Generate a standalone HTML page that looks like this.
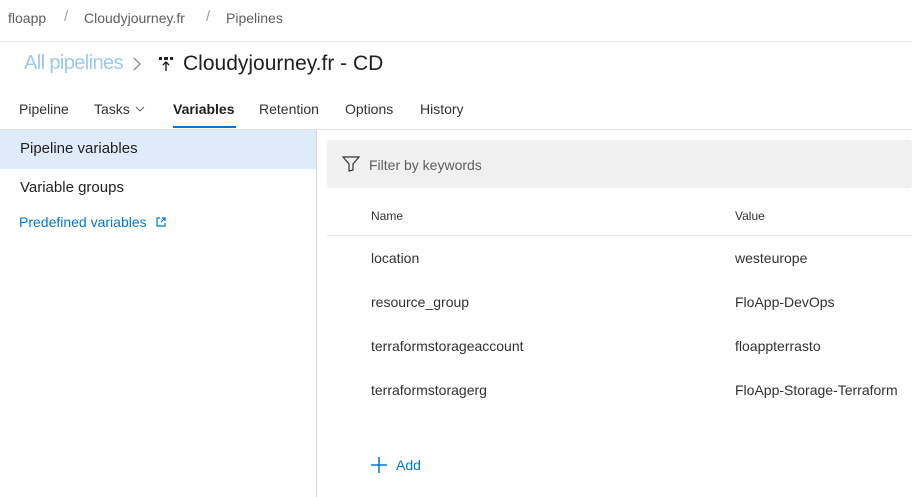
<!DOCTYPE html>
<html><head><style>
*{margin:0;padding:0;box-sizing:border-box}
body{width:912px;height:497px;overflow:hidden;background:#fff;font-family:"Liberation Sans",sans-serif;color:#323130;position:relative}
.a{position:absolute;white-space:nowrap}
</style></head><body>
<div class="a" style="left:8px;top:10px;font-size:14px;color:#605e5c">floapp</div>
<div class="a" style="left:64px;top:8px;font-size:15px;color:#a19f9d">/</div>
<div class="a" style="left:84px;top:10px;font-size:14px;color:#605e5c">Cloudyjourney.fr</div>
<div class="a" style="left:206px;top:8px;font-size:15px;color:#a19f9d">/</div>
<div class="a" style="left:226px;top:10px;font-size:14px;color:#605e5c">Pipelines</div>
<div class="a" style="left:0;top:41px;width:912px;height:1px;background:#e8e8e8"></div>
<div class="a" style="left:24px;top:52px;font-size:20px;letter-spacing:-0.6px;color:#9cc7ef">All pipelines</div>
<svg class="a" style="left:133px;top:57px" width="8" height="14" viewBox="0 0 8 14"><path d="M1 1l6 6-6 6" stroke="#8a8886" stroke-width="1.3" fill="none"/></svg>
<svg class="a" style="left:158px;top:56px" width="16" height="16" viewBox="0 0 16 16"><rect x="1" y="1" width="3" height="3" fill="#222"/><rect x="6" y="1" width="4" height="3" fill="#222"/><rect x="12" y="1" width="3" height="3" fill="#222"/><path d="M8 15V6M5 9l3-3 3 3" stroke="#222" stroke-width="1.4" fill="none"/></svg>
<div class="a" style="left:183px;top:52px;font-size:21px;color:#201f1e">Cloudyjourney.fr - CD</div>
<div class="a" style="left:19px;top:101px;font-size:14px">Pipeline</div>
<div class="a" style="left:94px;top:101px;font-size:14px">Tasks</div>
<svg class="a" style="left:135px;top:106px" width="10" height="6" viewBox="0 0 10 6"><path d="M1 1l4 4 4-4" stroke="#666" stroke-width="1" fill="none"/></svg>
<div class="a" style="left:173px;top:101px;font-size:14px;font-weight:bold;color:#201f1e">Variables</div>
<div class="a" style="left:173px;top:126px;width:63px;height:2px;background:#0078d4"></div>
<div class="a" style="left:259px;top:101px;font-size:14px">Retention</div>
<div class="a" style="left:345px;top:101px;font-size:14px">Options</div>
<div class="a" style="left:420px;top:101px;font-size:14px">History</div>
<div class="a" style="left:0;top:129px;width:912px;height:1px;background:#e0e0e0"></div>
<div class="a" style="left:0;top:130px;width:316px;height:39px;background:#deecf9"></div>
<div class="a" style="left:316px;top:130px;width:1px;height:367px;background:#d6d6d6"></div>
<div class="a" style="left:20px;top:140px;font-size:15px;color:#201f1e">Pipeline variables</div>
<div class="a" style="left:20px;top:179px;font-size:15px;color:#201f1e">Variable groups</div>
<div class="a" style="left:19px;top:214px;font-size:14px;color:#0078d4">Predefined variables</div>
<svg class="a" style="left:156px;top:217px" width="10" height="10" viewBox="0 0 10 10"><path d="M4 1H1v8h8V6M5 5l4-4M6 1h3v3" stroke="#0078d4" stroke-width="1.2" fill="none"/></svg>
<div class="a" style="left:327px;top:140px;width:585px;height:48px;background:#f0f0f0;border-radius:3px"></div>
<svg class="a" style="left:342px;top:156px" width="18" height="16" viewBox="0 0 18 16"><path d="M1 1h16l-6 7v6l-4 1V8z" fill="none" stroke="#333" stroke-width="1.2"/></svg>
<div class="a" style="left:369px;top:157px;font-size:14px;color:#605e5c">Filter by keywords</div>
<div class="a" style="left:371px;top:209px;font-size:12px;color:#323130">Name</div>
<div class="a" style="left:735px;top:209px;font-size:12px;color:#323130">Value</div>
<div class="a" style="left:327px;top:235px;width:585px;height:1px;background:#e6e6e6"></div>
<div class="a" style="left:371px;top:250px;font-size:14px">location</div><div class="a" style="left:735px;top:250px;font-size:14px">westeurope</div>
<div class="a" style="left:371px;top:294px;font-size:14px">resource_group</div><div class="a" style="left:735px;top:294px;font-size:14px">FloApp-DevOps</div>
<div class="a" style="left:371px;top:338px;font-size:14px">terraformstorageaccount</div><div class="a" style="left:735px;top:338px;font-size:14px">floappterrasto</div>
<div class="a" style="left:371px;top:382px;font-size:14px">terraformstoragerg</div><div class="a" style="left:735px;top:382px;font-size:14px">FloApp-Storage-Terraform</div>
<svg class="a" style="left:371px;top:457px" width="16" height="16"><path d="M8 0v16M0 8h16" stroke="#0078d4" stroke-width="1.5"/></svg>
<div class="a" style="left:396px;top:457px;font-size:14px;color:#0078d4">Add</div>
</body></html>
